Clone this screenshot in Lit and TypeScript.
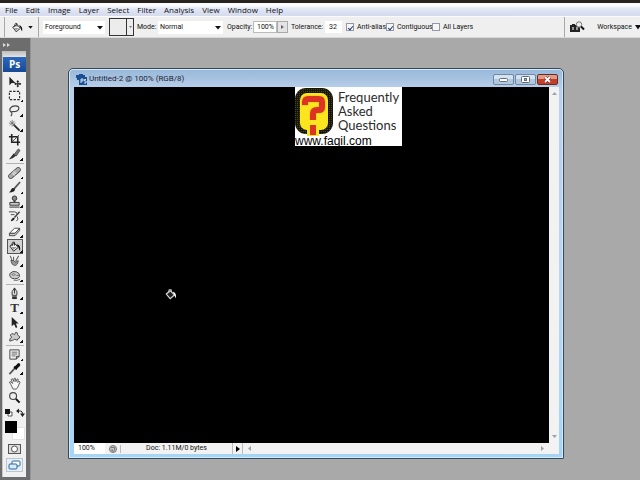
import { LitElement, html, svg, css } from "lit";
import { customElement, state } from "lit/decorators.js";

const MENUS = ["File", "Edit", "Image", "Layer", "Select", "Filter", "Analysis", "View", "Window", "Help"];

const bucket = svg`
  <path d="M2 6.500 L7 3.500 L11 8 L6 12 Z" fill="#f4f4f4" stroke="#222"/>
  <path d="M4.500 6.500 V3.500 Q5 1.500 7 2.500 V6" fill="none" stroke="#222"/>
  <path d="M9 4.500 Q14 5 13 11.500 Q11.500 10.500 11.500 8 Z" fill="#111"/>
  <path d="M3.500 7.500 H9.500 L6 10.500 Z" fill="#999"/>`;

const ICONS: Record<string, unknown> = {
  Move: svg`<path d="M1.500 2 V11 L4 8.500 L8 8.500 Z" fill="#222"/><path d="M10.500 6.500 V12.500 M7.500 9.500 H13.500" stroke="#222" stroke-width="1.200"/><path d="M10.500 5.500 l1.500 2 h-3z M10.500 13.500 l1.500-2 h-3z M6.500 9.500 l2-1.500 v3z M14.500 9.500 l-2-1.500 v3z" fill="#222"/>`,
  Marquee: svg`<rect x="1.500" y="2.500" width="11" height="9" fill="none" stroke="#222" stroke-width="1.200" stroke-dasharray="2.500 1.500"/>`,
  Lasso: svg`<path d="M3.500 9 C0 6 3 2 8 2 C13 2 13 7 8 8 C5.500 8.500 4 7.500 4 9 C4 10.500 5 11 3 13" fill="none" stroke="#444" stroke-width="1.200"/>`,
  Wand: svg`<path d="M6 6 L12.500 12.500" stroke="#222" stroke-width="1.800"/><path d="M4.500 1 V8 M1 4.500 H8 M2 2 L7 7 M7 2 L2 7" stroke="#666" stroke-width=".8"/>`,
  Crop: svg`<path d="M4 1 V10 H13 M1 4 H10.500 V13.500" fill="none" stroke="#222" stroke-width="1.700"/><path d="M4 10 L12 2" stroke="#444"/>`,
  Slice: svg`<path d="M1 12.500 L6 6 L9 8 L5 11 Z" fill="#333"/><path d="M6.500 7 L11 1 L13 2.500 L9 8.500 Z" fill="#777" stroke="#333" stroke-width=".7"/>`,
  "Healing Brush": svg`<path d="M3 11 L11 4" stroke="#444" stroke-width="5.500" stroke-linecap="round"/><path d="M3 11 L11 4" stroke="#aaa" stroke-width="4" stroke-linecap="round"/><path d="M5.500 9 L8.500 6" stroke="#eee" stroke-width="4" stroke-dasharray="1 1"/>`,
  Brush: svg`<path d="M6.500 8.500 L13 1" stroke="#555" stroke-width="1.800"/><path d="M1 12.500 Q3 11 3.500 9 Q5 6.500 7.500 8.500 Q8 12 1 12.500Z" fill="#222"/>`,
  Stamp: svg`<circle cx="7" cy="3.500" r="2.500" fill="#888" stroke="#333"/><path d="M6 6 h2 v2 h-2z" fill="#333"/><path d="M2 8 h10 v3 h-10z" fill="#ccc" stroke="#333"/><path d="M1.500 13 h11" stroke="#222"/>`,
  "History Brush": svg`<path d="M7 8 L12.500 2" stroke="#444" stroke-width="1.600"/><path d="M3 12 Q4 8 7 8 Q8 11 3 12Z" fill="#222"/><path d="M1 2 H7 Q10 2 10 5 M3 5 H7 M9 12 Q12 10 10 7" fill="none" stroke="#444"/>`,
  Eraser: svg`<path d="M1.500 9 L7 3.500 H12.500 L7.500 9 Z" fill="#fff" stroke="#444"/><path d="M1.500 9 V11.500 H7.500 L12.500 6 V3.500 L7.500 9 Z" fill="#ccc" stroke="#444"/>`,
  "Paint Bucket": bucket,
  Smudge: svg`<path d="M2.500 2 L5 9 M6 3 V8 M11.500 2 L8 8" stroke="#666" stroke-width="1.200"/><path d="M3 7 Q4 12 7 12.500 Q11 12 11 7 L8 9 L6 7 Z" fill="#999" stroke="#444" stroke-width=".8"/>`,
  Sponge: svg`<path d="M2 5 Q5 1.500 9 3 Q13 4.500 12.500 8 Q11 11 7 10.500 Q1 10 2 5Z" fill="#ccc" stroke="#444"/><path d="M4 6 Q6 4 8 6 Q6 8 4 6 M9 7 H12" fill="none" stroke="#777"/><path d="M6 12 Q10 13 13 11" fill="none" stroke="#666"/>`,
  Pen: svg`<path d="M7 1 Q11 5 9.500 9 H4.500 Q3 5 7 1Z" fill="#ddd" stroke="#333"/><path d="M7 1 V7" stroke="#333"/><path d="M4.500 10 h5 v3 h-5z" fill="#333"/>`,
  "Path Selection": svg`<path d="M4 1 V11 L6.500 9 L8.500 13 L10 12 L8.500 8 H11.500 Z" fill="#222"/>`,
  Shape: svg`<path d="M2 12 Q1 9 4 8 Q1 5 4 4 Q6 4 7 5 Q8 1 10 3 Q10 5 11 6 Q14 7 12 9 Q10 9 10 11 Q7 9 5 11 Z" fill="#ccc" stroke="#444"/>`,
  Notes: svg`<path d="M2 2 H12 V9 L9 12 H2 Z" fill="#eee" stroke="#444"/><path d="M4 4.500 H10 M4 6.500 H10 M4 8.500 H8" stroke="#666"/><path d="M12 9 H9 V12" fill="#888" stroke="#444"/>`,
  Eyedropper: svg`<path d="M1.500 13 L8 6" stroke="#555" stroke-width="1.800"/><path d="M6.500 5 L9.500 8" stroke="#111" stroke-width="1.800"/><path d="M8.500 6 L11.500 3" stroke="#111" stroke-width="3.500" stroke-linecap="round"/>`,
  Hand: svg`<path d="M3 8 L1.500 5.500 L3 5 L5 7 L3.500 2.500 L5 2 L6.500 5 V1.500 L8 1.500 L8.500 5 L10 2 L11 2.500 L10.500 6 L12 4.500 L13 5.500 L10.500 11 L9 13 H5.500 Z" fill="#f8f8f8" stroke="#555"/>`,
  Zoom: svg`<circle cx="5.500" cy="5.500" r="3.700" fill="#eee" stroke="#444" stroke-width="1.200"/><path d="M8.500 8.500 L12.500 12.500" stroke="#111" stroke-width="2.200"/>`,
};

const GROUPS: string[][] = [
  ["Move", "Marquee", "Lasso", "Wand", "Crop", "Slice"],
  ["Healing Brush", "Brush", "Stamp", "History Brush", "Eraser", "Paint Bucket", "Smudge", "Sponge"],
  ["Pen", "Type", "Path Selection", "Shape"],
  ["Notes", "Eyedropper", "Hand", "Zoom"],
];
const SINGLE = new Set(["Move", "Crop", "Hand", "Zoom"]);

const reset = css`
  :host { box-sizing: border-box; }
  *, *::before, *::after { box-sizing: border-box; }
  button, input, select { font: inherit; color: inherit; margin: 0; padding: 0; border: 0; border-radius: 0; background: none; }
  svg { display: block; }
`;

@customElement("ps-menu-bar")
class PsMenuBar extends LitElement {
  static styles = [reset, css`
    :host { display: block; border-top: 3px solid #292320; background: linear-gradient(#fafcff 0 3px, #e4e9f7 5px, #d5dcef 12px, #dadbe7 13px); }
    .menus { display: flex; gap: 8px; height: 13px; padding-left: 5px; font: 8px/13px "Open Sans", sans-serif; color: #111; }
  `];
  render() {
    return html`<nav class="menus">${MENUS.map((m) => html`<button>${m}</button>`)}</nav>`;
  }
}

@customElement("ps-options-bar")
class PsOptionsBar extends LitElement {
  static styles = [reset, css`
    :host { display: block; background: #efefef; border-top: 1px solid #fafafa; border-bottom: 1px solid #d8d8d8; }
    .bar { display: flex; align-items: center; height: 20px; padding-left: 4px; font: 7px/12px Roboto, sans-serif; color: #111; white-space: nowrap; overflow: hidden; }
    .bar > * { flex: none; }
    .tool { display: flex; align-items: center; gap: 5px; width: 35px; height: 20px; padding-left: 6px; border: solid #a8a8a8; border-width: 0 1px; }
    .pick { position: relative; height: 13px; background: #fff; }
    .pick select { appearance: none; width: 100%; height: 13px; padding-left: 2px; line-height: 13px; display: block; }
    .pick svg { position: absolute; right: 2px; top: 5px; pointer-events: none; }
    .fill { width: 62px; margin: 0 4px; }
    .mode { width: 65px; }
    .swatch { display: grid; grid-template-columns: 1fr 7px; width: 25px; height: 18px; margin-right: 3px; border: 1px solid #333; background: #ececec; place-items: center; }
    .drop { height: 16px; width: 7px; border-left: 1px solid #333; display: grid; place-items: center; }
    .cap { width: 21px; }
    .wide { width: 26px; margin-left: 4px; }
    .tol { width: 34px; margin-left: 3px; }
    .num { width: 24px; height: 12px; padding-left: 3px; background: #fff; border: 1px solid #bbb; }
    .num.small { width: 17px; border-color: #fff; }
    .step { display: grid; place-items: center; width: 11px; height: 12px; border: 1px solid #aaa; background: #e4e4e4; }
    .check { display: flex; align-items: center; gap: 3px; width: 40px; }
    .check.long { width: 46px; }
    .check input { flex: none; appearance: none; width: 8px; height: 8px; border: 1px solid #8f9aa6; background: #f6f6f6; display: grid; place-items: center; }
    .check input:checked::before { content: ""; width: 3px; height: 5px; border: solid #223a78; border-width: 0 1px 1px 0; transform: rotate(40deg); }
    .checks { display: flex; padding-left: 4px; }
    .end { display: flex; align-items: center; gap: 12px; height: 20px; margin-left: auto; padding-left: 4px; border-left: 1px solid #a8a8a8; }
    .work { display: flex; align-items: center; gap: 3px; }
  `];
  private caret = html`<svg width="6" height="4" viewBox="0 0 6 4"><path d="M0 0H6L3 3.500Z" fill="#111"/></svg>`;
  render() {
    return html`<div class="bar">
      <button class="tool" aria-label="Tool preset">
        <svg width="12" height="13" viewBox="0 0 14 14">${bucket}</svg>
        <svg width="5" height="3" viewBox="0 0 6 4"><path d="M0 0H6L3 3.500Z" fill="#111"/></svg>
      </button>
      <span class="pick fill"><select aria-label="Fill source"><option>Foreground</option></select>${this.caret}</span>
      <span class="swatch"><span></span><button class="drop" aria-label="Pattern picker"><svg width="3" height="2" viewBox="0 0 3 2"><path d="M0 0H3L1.500 2Z" fill="#777"/></svg></button></span>
      <label class="cap" for="mode">Mode:</label>
      <span class="pick mode"><select id="mode"><option>Normal</option></select>${this.caret}</span>
      <label class="wide" for="opacity">Opacity:</label>
      <input class="num" id="opacity" value="100%">
      <button class="step" aria-label="Opacity slider"><svg width="3" height="4" viewBox="0 0 3 4"><path d="M0 0L3 2L0 4Z" fill="#667"/></svg></button>
      <label class="tol" for="tolerance">Tolerance:</label>
      <input class="num small" id="tolerance" value="32">
      <span class="checks">
        <label class="check"><input type="checkbox" checked>Anti-alias</label>
        <label class="check long"><input type="checkbox" checked>Contiguous</label>
        <label class="check"><input type="checkbox">All Layers</label>
      </span>
      <div class="end">
        <button aria-label="Go to Bridge"><svg width="16" height="12" viewBox="0 0 16 12">
          <path d="M1 4H3V3H6V4H11V11H1Z" fill="#222"/><path d="M3 6H5V9H3ZM7 6H9V9H7Z" fill="#999"/>
          <circle cx="10" cy="3.500" r="2.700" fill="#eee" stroke="#777"/><path d="M12 5.500L15 8.500" stroke="#111" stroke-width="2"/>
        </svg></button>
        <button class="work">Workspace <svg width="5" height="5" viewBox="0 0 5 5"><path d="M0 0H6L3 4.500Z" fill="#111"/></svg></button>
      </div>
    </div>`;
  }
}

@customElement("ps-toolbox")
class PsToolbox extends LitElement {
  @state() private active = "Paint Bucket";
  static styles = [reset, css`
    :host { display: flex; flex-direction: column; width: 31px; background: #6d6d6d; padding: 0 4px 3px 2px; border-right: 1px solid #949494; }
    .expand { display: flex; align-items: center; height: 13px; padding-left: 1px; }
    .panel { flex: 1; background: #f0f0f0; display: flex; flex-direction: column; align-items: center; border-left: 1px solid #c8c8c8; }
    .grip { align-self: stretch; height: 6px; background: linear-gradient(#bcbcbc, #e4e4e4); }
    .brand { align-self: stretch; height: 15px; margin-bottom: 2px; background: linear-gradient(#2c68bd, #164a96); color: #fff; text-align: center; font: 700 10px/15px "Open Sans", sans-serif; }
    .group { display: grid; grid-auto-rows: minmax(0, 1fr); width: 16px; }
    .g6 { height: 88px; }
    .g8 { height: 118px; }
    .g4 { height: 58px; }
    .rule { width: 18px; height: 1px; margin: 1px 0; background: #b4b4b4; }
    .tool { position: relative; display: flex; align-items: center; justify-content: center; width: 16px; min-height: 0; outline-offset: -1px; }
    .tool.on { outline: 1px solid #555; background: #d2d2d2; }
    .tool.more::after { content: ""; position: absolute; right: 0; bottom: 1px; width: 3px; height: 3px; background: linear-gradient(135deg, transparent 50%, #111 50%); }
    .type { font: 700 13px/13px "Liberation Serif", serif; color: #333; }
    .mini { display: flex; justify-content: space-between; width: 20px; height: 10px; margin: 3px 0; }
    .colors { position: relative; width: 20px; height: 19px; }
    .fore, .back { position: absolute; width: 12px; height: 12px; }
    .fore { left: 0; top: 0; background: #000; }
    .back { right: 0; bottom: 0; width: 13px; height: 13px; background: #fff; border: 1px solid #e2e2e2; }
    .mask { margin-top: 4px; }
    .screen { display: grid; place-items: center; width: 17px; height: 14px; margin-top: 4px; border: 1px solid #b9c5d0; background: #e8f0f6; }
  `];
  render() {
    return html`
      <button class="expand" aria-label="Expand panel"><svg width="7" height="4" viewBox="0 0 7 4"><path d="M0 0L3 2L0 4ZM4 0L7 2L4 4Z" fill="#ddd"/></svg></button>
      <div class="panel">
        <div class="grip"></div>
        <div class="brand">Ps</div>
        ${GROUPS.map((g, i) => html`
          ${i ? html`<div class="rule"></div>` : ""}
          <div class="group g${g.length}">${g.map((t) => html`
            <button class="tool ${SINGLE.has(t) ? "" : "more"} ${t === this.active ? "on" : ""}" aria-label=${t} @click=${() => (this.active = t)}>
              ${t === "Type" ? html`<span class="type">T</span>` : html`<svg width="13" height="13" viewBox="0 0 14 14">${ICONS[t]}</svg>`}
            </button>`)}</div>`)}
        <div class="mini">
          <svg width="8" height="9" viewBox="0 0 8 9"><path d="M3 4H7V8H3Z" fill="#fff" stroke="#555"/><path d="M0 1H5V6H0Z" fill="#111"/></svg>
          <svg width="9" height="9" viewBox="0 0 9 9"><path d="M2 3H4.500Q6.500 3 6.500 6" fill="none" stroke="#222"/><path d="M0 3L3 .5V5.500ZM4 5.500H9L6.500 9Z" fill="#222"/></svg>
        </div>
        <div class="colors"><button class="back" aria-label="Background color"></button><button class="fore" aria-label="Foreground color"></button></div>
        <button class="mask" aria-label="Quick mask"><svg width="13" height="10" viewBox="0 0 13 10"><rect x=".5" y=".5" width="12" height="9" fill="#ddd" stroke="#555"/><circle cx="6.500" cy="5" r="3" fill="#fff" stroke="#555"/></svg></button>
        <button class="screen" aria-label="Screen mode"><svg width="13" height="10" viewBox="0 0 13 10"><rect x="4" y="1" width="8" height="5" rx="1" fill="#fff" stroke="#2b669f"/><rect x="1" y="4" width="8" height="5" rx="1" fill="#d8ebfa" stroke="#2b669f"/></svg></button>
      </div>`;
  }
}

@customElement("ps-document")
class PsDocument extends LitElement {
  static styles = [reset, css`
    :host { display: flex; flex-direction: column; padding: 0 4px 4px 5px; border: 1px solid #344a5a; border-radius: 5px 5px 1px 1px; background: linear-gradient(#98b7d9, #b9d0ea 20px, #b9d7f3 60%, #a5d5f5); box-shadow: inset 0 0 0 1px #d4e8f8; overflow: hidden; }
    .title { display: flex; align-items: center; gap: 2px; height: 18px; padding: 2px 1px 0 2px; font: 8px/12px Roboto, sans-serif; color: #1a2230; }
    .name { flex: 1; white-space: nowrap; }
    .controls { display: flex; gap: 1px; }
    .win { display: grid; place-items: center; width: 21px; height: 11px; border: 1px solid #7088a2; border-radius: 2px; background: linear-gradient(#d5e3f1 50%, #b1c8df 50%); }
    .win.close { border-color: #6b2a20; background: linear-gradient(#e09a88 50%, #c2402a 50%); }
    .body { flex: 1; display: grid; grid-template-columns: 1fr 10px; }
    .canvas { position: relative; background: #000; overflow: hidden; }
    .scroll { display: flex; flex-direction: column; align-items: center; justify-content: space-between; padding: 4px 0; background: #f2f2f2; }
    .badge { position: absolute; left: 221px; top: 0; display: grid; grid-template-columns: 43px 1fr; width: 107px; height: 59px; background: #fff; color: #111; }
    .words { padding-top: 3px; font: 13px/14px Lato, sans-serif; color: #2c2c2c; }
    .words span { display: block; }
    .site { grid-column: 1 / -1; font: 12px/10px "Liberation Sans", sans-serif; color: #000; text-decoration: none; }
    .cursor { position: absolute; left: 91px; top: 201px; }
    .status { display: flex; align-items: center; height: 11px; background: #f2f2f2; font: 7px/11px Roboto, sans-serif; color: #111; }
    .status > * { flex: none; }
    .zoom { width: 31px; height: 11px; padding-left: 4px; background: #fff; }
    .globe { display: grid; place-items: center; width: 16px; border-right: 1px solid #bbb; }
    .doc { width: 111px; text-align: center; }
    .more { display: grid; place-items: center; width: 11px; height: 11px; border: solid #bbb; border-width: 0 1px; }
    .status .track { flex: 1; display: flex; justify-content: space-between; padding: 0 14px 0 4px; }
  `];
  private arrow(d: string) {
    return html`<button aria-label="Scroll"><svg width="5" height="5" viewBox="0 0 5 5"><path d=${d} fill="#9aa2ac"/></svg></button>`;
  }
  render() {
    return html`
      <header class="title">
        <svg width="11" height="11" viewBox="0 0 11 11"><path d="M0 1H3V0H7V1H9V3H11V11H3V6H1V4H0Z" fill="#1b4f92"/><path d="M5 9V5H7V7H5M8 9H10V7H8.500V5.500H10" fill="none" stroke="#cfe3f8"/></svg>
        <span class="name">Untitled-2 @ 100% (RGB/8)</span>
        <div class="controls">
          <button class="win" aria-label="Minimize"><svg width="9" height="5" viewBox="0 0 9 5"><rect x=".5" y="1.500" width="8" height="3" rx="1" fill="#fff" stroke="#5d6b7c"/></svg></button>
          <button class="win" aria-label="Maximize"><svg width="9" height="7" viewBox="0 0 9 7"><rect x=".5" y=".5" width="8" height="6" rx="1" fill="#fff" stroke="#5d6b7c"/><rect x="3.500" y="2.500" width="2" height="2" fill="#9fb4ca" stroke="#5d6b7c"/></svg></button>
          <button class="win close" aria-label="Close"><svg width="9" height="7" viewBox="0 0 9 7"><path d="M2 1L7 6M7 1L2 6" stroke="#6b2a20" stroke-width="3"/><path d="M2 1L7 6M7 1L2 6" stroke="#fff" stroke-width="1.800"/></svg></button>
        </div>
      </header>
      <div class="body">
        <div class="canvas">
          <div class="badge">
            <svg width="39" height="49" viewBox="0 0 39 49">
              <defs><pattern id="dots" width="2" height="2" patternUnits="userSpaceOnUse"><rect width="1" height="1" fill="#a89a20"/></pattern></defs>
              <rect x="0" y="1" width="38" height="46" rx="11" fill="#17160a"/>
              <rect x="0" y="1" width="38" height="46" rx="11" fill="url(#dots)" opacity=".35"/>
              <rect x="5" y="6" width="28" height="37" rx="7" fill="#fbe51e"/>
              <path d="M10 19V15Q10 12 13 12H24Q27 12 27 15V20Q27 23 24 23H22Q18 23 18 27V33" fill="none" stroke="#ffd21c" stroke-width="8"/>
              <path d="M10 18V15Q10 12 13 12H24Q27 12 27 15V20Q27 23 24 23H22Q18 23 18 27V33" fill="none" stroke="#dc3325" stroke-width="6"/>
              <path d="M12 37H24V49H12Z" fill="#fbe51e"/><path d="M15 38H21V48H15Z" fill="#dc3325"/>
            </svg>
            <div class="words"><span>Frequently</span><span>Asked</span><span>Questions</span></div>
            <a class="site" href="#">www.faqil.com</a>
          </div>
          <svg class="cursor" width="12" height="12" viewBox="0 0 14 14">
            <path d="M1.500 7 L6 3 L11 8 L6 12.500 Z" fill="#222" stroke="#ddd" stroke-width="1.300"/><path d="M4.500 6 V2 H7.500 V5" fill="none" stroke="#ccc"/><path d="M9 4 Q14 6 12.500 12 L10.500 8Z" fill="#fff"/>
          </svg>
        </div>
        <div class="scroll">${this.arrow("M0 4H5L2.500 1Z")}${this.arrow("M0 1H5L2.500 4Z")}</div>
      </div>
      <footer class="status">
        <input class="zoom" aria-label="Zoom" value="100%">
        <button class="globe" aria-label="Version status"><svg width="8" height="8" viewBox="0 0 8 8"><circle cx="4" cy="4" r="3.500" fill="#c6c6c6" stroke="#777"/><path d="M2 2.500H5.500V5.500M3 4V6H5" fill="none" stroke="#777"/></svg></button>
        <span class="doc">Doc: 1.11M/0 bytes</span>
        <button class="more" aria-label="Status options"><svg width="4" height="6" viewBox="0 0 4 6"><path d="M0 0L4 3L0 6Z" fill="#000"/></svg></button>
        <div class="track">${this.arrow("M4 0V5L1 2.500Z")}${this.arrow("M1 0V5L4 2.500Z")}</div>
      </footer>`;
  }
}

@customElement("app-root")
class AppRoot extends LitElement {
  static styles = [reset, css`
    :host { display: flex; flex-direction: column; min-height: 100vh; background: #a9a9a9; }
    .work { flex: 1; display: flex; }
    .desk { flex: 1; display: flex; padding: 30px 76px 21px 37px; }
    .doc { flex: 1; min-width: 0; }
  `];
  render() {
    return html`
      <ps-menu-bar></ps-menu-bar>
      <ps-options-bar></ps-options-bar>
      <main class="work">
        <ps-toolbox></ps-toolbox>
        <div class="desk"><ps-document class="doc"></ps-document></div>
      </main>`;
  }
}
